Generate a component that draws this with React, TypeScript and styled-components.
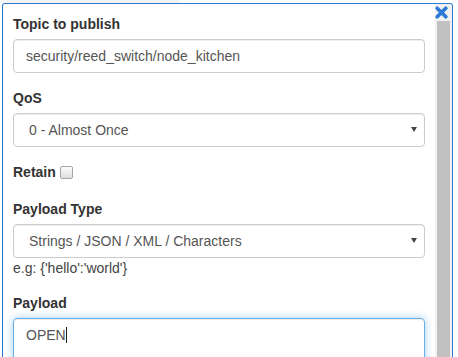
import React from "react";
import styled, { createGlobalStyle } from "styled-components";

const GlobalStyle = createGlobalStyle`
  html, body {
    margin: 0;
    padding: 0;
    height: 357px;
    overflow: hidden;
    background: #fff;
  }
  body {
    font-family: "Liberation Sans", Arial, Helvetica, sans-serif;
    font-size: 14px;
    line-height: 20px;
    color: #333;
  }
  * {
    box-sizing: border-box;
  }
`;

const TopShade = styled.div`
  position: absolute;
  top: 0;
  left: 0;
  width: 180px;
  height: 3px;
  background: #f4f4f4;
`;

const Panel = styled.div`
  position: relative;
  margin: 3px 0 0 2px;
  width: 451px;
  height: 356px;
  border: 1px solid #2d7ad6;
  border-bottom: 0;
  border-radius: 3px 3px 0 0;
  display: flex;
  background: #fff;
  overflow: hidden;
`;

const Body = styled.form`
  flex: 1;
  padding: 10px 10px 0 10px;
  overflow: hidden;
`;

const Track = styled.div`
  width: 17px;
  background: #f1f1f1;
  padding: 17px 2px 0 2px;
`;

const Thumb = styled.div`
  width: 13px;
  height: 100%;
  background: #c1c1c1;
`;

const Close = styled.button`
  position: absolute;
  top: 2px;
  right: 4px;
  width: 13px;
  height: 13px;
  padding: 0;
  border: 0;
  background: transparent;
  cursor: pointer;
  display: flex;
`;

const Group = styled.div`
  margin-bottom: 15px;
`;

const Label = styled.label`
  display: block;
  font-weight: bold;
  margin-bottom: 5px;
  color: #333;
`;

const InlineRow = styled.div`
  display: flex;
  align-items: flex-start;
  height: 22px;
`;

const InlineLabel = styled.label`
  font-weight: bold;
  color: #333;
  line-height: 20px;
`;

const Checkbox = styled.input`
  appearance: none;
  width: 13px;
  height: 13px;
  margin: 4px 0 0 4px;
  border: 1px solid #a6a6a6;
  border-radius: 2px;
  background: linear-gradient(#fbfbfb, #dedede);
`;

const Control = styled.input`
  display: block;
  width: 100%;
  height: 34px;
  padding: 6px 12px;
  font-family: inherit;
  font-size: 14px;
  line-height: 20px;
  color: #555;
  background: #fff;
  border: 1px solid #ccc;
  border-radius: 4px;
  box-shadow: inset 0 1px 1px rgba(0, 0, 0, 0.075);
  outline: none;
`;

const SelectWrap = styled.div`
  position: relative;
  &::after {
    content: "";
    position: absolute;
    right: 8px;
    top: 14px;
    border-left: 3px solid transparent;
    border-right: 3px solid transparent;
    border-top: 5px solid #444;
    pointer-events: none;
  }
`;

const Select = styled.select`
  display: block;
  width: 100%;
  height: 34px;
  padding: 6px 12px 6px 15px;
  font-family: inherit;
  font-size: 14px;
  line-height: 20px;
  color: #555;
  background: #fff;
  border: 1px solid #ccc;
  border-radius: 4px;
  box-shadow: inset 0 1px 1px rgba(0, 0, 0, 0.075);
  appearance: none;
  outline: none;
`;

const Help = styled.div`
  color: #444;
  line-height: 20px;
`;

const Area = styled.div`
  height: 60px;
  padding: 6px 12px;
  color: #555;
  border: 1px solid #66afe9;
  border-radius: 4px;
  box-shadow: inset 0 1px 1px rgba(0, 0, 0, 0.075), 0 0 8px rgba(102, 175, 233, 0.6);
`;

const Caret = styled.span`
  display: inline-block;
  width: 1px;
  height: 16px;
  background: #222;
  vertical-align: -3px;
`;

export default function App() {
  return (
    <>
      <GlobalStyle />
      <TopShade />
      <Panel>
        <Body onSubmit={(e) => e.preventDefault()}>
          <Group>
            <Label>Topic to publish</Label>
            <Control defaultValue="security/reed_switch/node_kitchen" />
          </Group>
          <Group>
            <Label>QoS</Label>
            <SelectWrap>
              <Select defaultValue="0">
                <option value="0">0 - Almost Once</option>
                <option value="1">1 - At Least Once</option>
                <option value="2">2 - Exactly Once</option>
              </Select>
            </SelectWrap>
          </Group>
          <Group>
            <InlineRow>
              <InlineLabel>Retain</InlineLabel>
              <Checkbox type="checkbox" />
            </InlineRow>
          </Group>
          <Group>
            <Label>Payload Type</Label>
            <SelectWrap>
              <Select defaultValue="str">
                <option value="str">Strings / JSON / XML / Characters</option>
                <option value="num">Number</option>
              </Select>
            </SelectWrap>
            <Help>e.g: {"{'hello':'world'}"}</Help>
          </Group>
          <Group>
            <Label>Payload</Label>
            <Area>
              OPEN
              <Caret />
            </Area>
          </Group>
        </Body>
        <Track>
          <Thumb />
        </Track>
        <Close type="button" aria-label="close">
          <svg width="13" height="13" viewBox="0 0 13 13">
            <path
              d="M2.2 2.2 L10.8 10.8 M10.8 2.2 L2.2 10.8"
              stroke="#2d7ad6"
              strokeWidth="3.6"
              strokeLinecap="round"
            />
          </svg>
        </Close>
      </Panel>
    </>
  );
}
